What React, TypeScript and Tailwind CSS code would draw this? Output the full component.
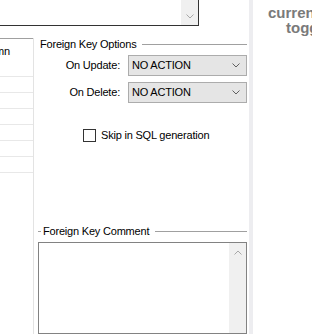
import React from "react";

function Chevron({ up = false, color = "#606060" }: { up?: boolean; color?: string }) {
  return (
    <svg width="8" height="5" viewBox="0 0 8 5" className="block">
      <polyline
        points={up ? "0.5,4.5 4,1 7.5,4.5" : "0.5,0.5 4,4 7.5,0.5"}
        fill="none"
        stroke={color}
        strokeWidth="1"
      />
    </svg>
  );
}

function SelectBox({ value }: { value: string }) {
  return (
    <div className="ml-[8px] flex h-[21px] flex-1 items-center justify-between border border-[#acacac] bg-[#e5e5e5] pl-[3px] pr-[6px]">
      <span>{value}</span>
      <Chevron />
    </div>
  );
}

function GroupTitle({ label, dash = false }: { label: string; dash?: boolean }) {
  return (
    <div className="flex h-[13px] items-center">
      {dash && <div className="h-px w-[3px] bg-[#a0a0a0]" />}
      <span className="ml-[2px] leading-[13px]">{label}</span>
      <div className="ml-[6px] h-px flex-1 bg-[#a0a0a0]" />
    </div>
  );
}

const rows = [0, 1, 2, 3, 4, 5];

export default function App() {
  return (
    <div className="flex h-[334px] w-[312px] overflow-hidden bg-white font-['Liberation_Sans',Arial,sans-serif] text-[11px] tracking-[-0.2px] text-black">
      <div className="flex w-[249px] flex-col">
        <div className="flex h-[26px] w-[199px] justify-end border-b border-r border-[#333]">
          <div className="flex w-[17px] flex-col items-center justify-end bg-[#f0f0f0] pb-[6px]">
            <Chevron color="#a8a8a8" />
          </div>
        </div>

        <div className="mt-[12px] flex flex-1">
          <div className="w-[34px] border-r border-[#e3e3e3]">
            <div className="flex h-[39px] justify-end overflow-hidden whitespace-nowrap border-b border-t border-b-[#e8e8e8] border-t-[#a0a0a0] pr-[23px] pt-[4px]">
              <span>Column</span>
            </div>
            {rows.map((r) => (
              <div key={r} className="h-[16px] border-b border-[#e8e8e8]" />
            ))}
          </div>

          <div className="flex flex-1 flex-col pl-[4px] pr-[2px]">
            <GroupTitle label="Foreign Key Options" />
            <div className="mt-[4px] flex flex-col gap-[6px]">
              <div className="flex h-[21px] items-center">
                <span className="w-[82px] text-right">On Update:</span>
                <SelectBox value="NO ACTION" />
              </div>
              <div className="flex h-[21px] items-center">
                <span className="w-[82px] text-right">On Delete:</span>
                <SelectBox value="NO ACTION" />
              </div>
            </div>

            <div className="mt-[26px] flex h-[13px] items-center pl-[45px]">
              <div className="h-[13px] w-[13px] border border-[#333] bg-white" />
              <span className="ml-[5px]">Skip in SQL generation</span>
            </div>

            <div className="mt-[83px]">
              <GroupTitle label="Foreign Key Comment" dash />
            </div>
            <div className="mt-[4px] flex flex-1 justify-end border border-[#828282]">
              <div className="flex w-[17px] flex-col items-center bg-[#f0f0f0] pt-[7px]">
                <Chevron up color="#a8a8a8" />
              </div>
            </div>
          </div>
        </div>
      </div>

      <div className="w-[4px] bg-[#ededf0]" />

      <div className="flex-1 overflow-hidden whitespace-nowrap pt-[5px] text-[15px] font-bold leading-[15px] tracking-normal text-[#7a7a7a]">
        <div className="pl-[15px]">current</div>
        <div className="pl-[33px]">toggle</div>
      </div>
    </div>
  );
}
